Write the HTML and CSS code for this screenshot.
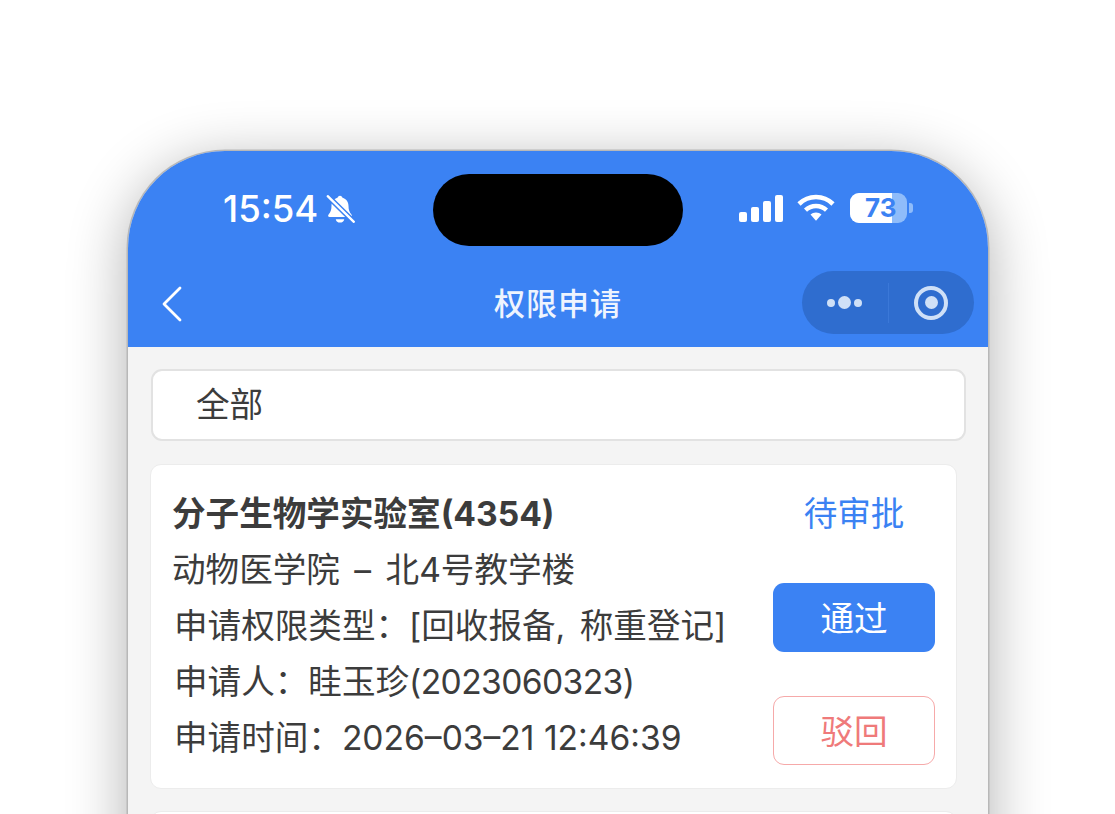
FILE: index.html
```html
<!DOCTYPE html>
<html lang="zh-CN">
<head>
    <meta charset="UTF-8">
    <meta name="viewport" content="width=device-width, initial-scale=1.0">
    <title>权限申请</title>
    <link rel="stylesheet" href="styles.css">
</head>
<body>
    <div class="phone">
        <div class="island"></div>
        <header class="top">
            <div class="status-bar">
                <div class="status-left">
                    <span class="clock">15:54</span>
                    <svg class="bell" width="32" height="32" viewBox="0 0 30 30">
                        <path d="M15 2.500c1.300 0 2.200.9 2.300 2 3.600 1 5.700 4 5.700 8 0 3.500.8 5.500 2.700 7.600 1 1.100.3 2.400-1 2.400H5.300c-1.300 0-2-1.300-1-2.400C6.200 18 7 16 7 12.500c0-4 2.100-7 5.700-8 .1-1.100 1-2 2.300-2z" fill="#fff"/>
                        <path d="M11 24.500h8c-.3 2-2 3.200-4 3.200s-3.700-1.200-4-3.200z" fill="#fff"/>
                        <path d="M3 2.500l25 24.500" stroke="#3b82f3" stroke-width="5"/>
                        <path d="M3.500 3l24.500 24" stroke="#fff" stroke-width="2.200" stroke-linecap="round"/>
                    </svg>
                </div>
                <div class="status-right">
                    <div class="signal">
                        <span class="bar-1"></span>
                        <span class="bar-2"></span>
                        <span class="bar-3"></span>
                        <span class="bar-4"></span>
                    </div>
                    <svg class="wifi" width="38" height="28" viewBox="0 0 38 28">
                        <path d="M2 10C6.500 5.600 12.500 3 19 3s12.500 2.600 17 7" fill="none" stroke="#fff" stroke-width="4.600"/>
                        <path d="M8.500 16.200C11.300 13.500 15 12 19 12s7.700 1.500 10.500 4.200" fill="none" stroke="#fff" stroke-width="4.400"/>
                        <path d="M13.500 20.500c1.500-1.300 3.400-2 5.500-2s4 .7 5.500 2L19 26.800z" fill="#fff"/>
                    </svg>
                    <div class="battery">
                        <div class="battery-body">
                            <span class="battery-fill"></span>
                            <span class="battery-num">73</span>
                        </div>
                        <span class="battery-tip"></span>
                    </div>
                </div>
            </div>
            <nav class="nav">
                <svg class="back" width="24" height="36" viewBox="0 0 24 36">
                    <path d="M20 2L4 18l16 16" fill="none" stroke="#fff" stroke-width="2.800" stroke-linecap="round" stroke-linejoin="round"/>
                </svg>
                <h1 class="nav-title">权限申请</h1>
                <div class="capsule">
                    <div class="capsule-part">
                        <span class="dot"></span>
                        <span class="dot dot-big"></span>
                        <span class="dot"></span>
                    </div>
                    <span class="capsule-line"></span>
                    <div class="capsule-part">
                        <span class="target"><span class="target-core"></span></span>
                    </div>
                </div>
            </nav>
        </header>

        <main class="content">
            <div class="filter">全部</div>

            <section class="card">
                <div class="card-info">
                    <div class="card-name">分子生物学实验室(4354)</div>
                    <div class="card-line wide">动物医学院 – 北4号教学楼</div>
                    <div class="card-line indent wide">申请权限类型：[回收报备, 称重登记]</div>
                    <div class="card-line indent">申请人：眭玉珍<span class="num">(2023060323)</span></div>
                    <div class="card-line indent">申请时间：2026–03–21 12:46:39</div>
                </div>
                <div class="card-side">
                    <div class="card-status">待审批</div>
                    <button class="btn btn-pass">通过</button>
                    <button class="btn btn-reject">驳回</button>
                </div>
            </section>

            <section class="card"></section>
        </main>
    </div>
</body>
</html>
```

FILE: styles.css
```css
html, body {
    height: 100%;
    margin: 0;
    overflow: hidden;
}
body {
    background-color: #fff;
    font-family: "Inter", "Liberation Sans", "Noto Sans CJK SC", sans-serif;
    color: #3c3c3c;
    padding-top: 151px;
    box-sizing: border-box;
}
.phone {
    position: relative;
    width: 860px;
    height: 900px;
    margin-left: 128px;
    background-color: #f4f4f4;
    border-radius: 97px 97px 0 0;
    box-shadow: 0 0 0 1.5px #b8b8b8, 0 12px 60px rgba(0, 0, 0, 0.32);
    overflow: hidden;
}
.island {
    position: absolute;
    top: 23px;
    left: 305px;
    width: 250px;
    height: 72px;
    background-color: #000;
    border-radius: 36px;
}

/* top blue area */
.top {
    background-color: #3b82f3;
    height: 196px;
    color: #fff;
}
.status-bar {
    height: 118px;
    display: flex;
    justify-content: space-between;
    align-items: flex-start;
}
.status-left {
    display: flex;
    align-items: center;
    margin: 40px 0 0 95px;
}
.clock {
    font-size: 36.5px;
    font-weight: 500;
    line-height: 36px;
}
.bell {
    margin-left: 6px;
}
.status-right {
    display: flex;
    align-items: center;
    margin: 42px 75px 0 0;
}
.signal {
    display: flex;
    align-items: flex-end;
    gap: 4px;
    height: 28px;
}
.signal span {
    width: 8px;
    background-color: #fff;
    border-radius: 2px;
}
.bar-1 { height: 10px; }
.bar-2 { height: 15px; }
.bar-3 { height: 21px; }
.bar-4 { height: 27px; }
.wifi {
    margin-left: 14px;
}
.battery {
    display: flex;
    align-items: center;
    margin-left: 15px;
}
.battery-body {
    position: relative;
    width: 57px;
    height: 30px;
    background-color: #8fbcfa;
    border-radius: 9px;
    overflow: hidden;
}
.battery-fill {
    position: absolute;
    left: 0;
    top: 0;
    bottom: 0;
    width: 42px;
    background-color: #fff;
}
.battery-num {
    position: absolute;
    left: 15px;
    top: 0;
    font-size: 26px;
    font-weight: 700;
    line-height: 30px;
    color: #3b82f3;
}
.battery-tip {
    width: 4px;
    height: 10px;
    margin-left: 2px;
    background-color: #8fbcfa;
    border-radius: 0 3px 3px 0;
}
.nav {
    position: relative;
    box-sizing: border-box;
    height: 78px;
    padding-bottom: 14px;
    display: flex;
    align-items: center;
    justify-content: center;
}
.back {
    position: absolute;
    left: 32px;
    top: 17px;
}
.nav-title {
    margin: 0;
    font-size: 31px;
    font-weight: 500;
    letter-spacing: 1px;
    color: #eef4fe;
}
.capsule {
    position: absolute;
    right: 14px;
    top: 2px;
    width: 172px;
    height: 63px;
    display: flex;
    align-items: center;
    background-color: #2f6dcf;
    border-radius: 32px;
}
.capsule-part {
    flex: 1;
    display: flex;
    align-items: center;
    justify-content: center;
    gap: 3px;
}
.capsule-line {
    width: 1px;
    height: 40px;
    background-color: #3b78d8;
}
.dot {
    width: 8px;
    height: 8px;
    background-color: #cfe0f7;
    border-radius: 50%;
}
.dot-big {
    width: 13px;
    height: 13px;
}
.target {
    width: 34px;
    height: 34px;
    box-sizing: border-box;
    border: 4px solid #cfe0f7;
    border-radius: 50%;
    display: flex;
    align-items: center;
    justify-content: center;
}
.target-core {
    width: 13px;
    height: 13px;
    background-color: #cfe0f7;
    border-radius: 50%;
}

/* list */
.content {
    padding: 22px 22px 0 22px;
}
.filter {
    box-sizing: border-box;
    width: 815px;
    height: 72px;
    margin: 0 0 23px 1px;
    padding-left: 43px;
    background-color: #fff;
    border: 2px solid #e2e2e2;
    border-radius: 11px;
    font-size: 33.6px;
    line-height: 68px;
}
.card {
    box-sizing: border-box;
    width: 807px;
    height: 325px;
    margin-bottom: 22px;
    padding: 21px 21px 0 21px;
    display: flex;
    justify-content: space-between;
    background-color: #fff;
    border: 1px solid #ececec;
    border-radius: 11px;
}
.card-info {
    font-size: 33.6px;
    line-height: 56px;
    white-space: nowrap;
}
.card-name {
    font-weight: 700;
    line-height: 56px;
}
.indent {
    margin-left: 2px;
}
.wide {
    word-spacing: 5px;
}
.num {
    letter-spacing: -0.6px;
}
.card-side {
    width: 162px;
    display: flex;
    flex-direction: column;
    align-items: center;
}
.card-status {
    font-size: 33.6px;
    line-height: 56px;
    color: #3b82f3;
    margin-bottom: 41px;
}
.btn {
    box-sizing: border-box;
    width: 162px;
    height: 69px;
    padding: 0 0 3px 0;
    font-family: inherit;
    font-size: 33.6px;
    border-radius: 11px;
}
.btn-pass {
    background-color: #3b82f3;
    border: none;
    color: #fff;
    margin-bottom: 44px;
}
.btn-reject {
    background-color: #fff;
    border: 1px solid #f6a9a9;
    color: #ef7a7a;
}
```
